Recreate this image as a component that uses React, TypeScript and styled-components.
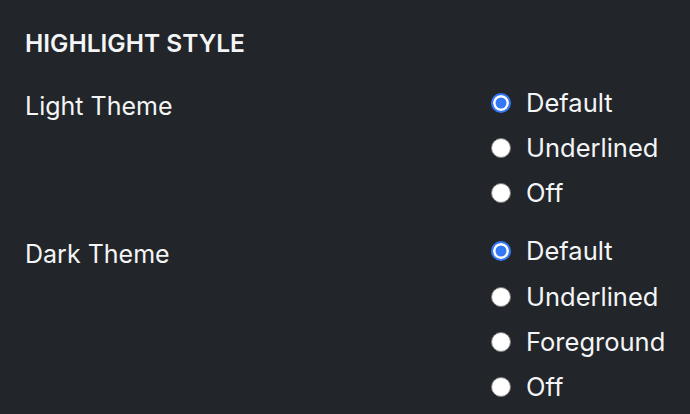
import styled, { createGlobalStyle } from "styled-components";

const GlobalStyle = createGlobalStyle`
  html, body {
    margin: 0;
    padding: 0;
    background: #222529;
  }
  body {
    font-family: Inter, "Noto Sans", sans-serif;
    color: #f4f5f6;
  }
`;

interface ThemeOption {
  name: string;
  options: string[];
  selected: string;
}

const themes: ThemeOption[] = [
  { name: "Light Theme", options: ["Default", "Underlined", "Off"], selected: "Default" },
  { name: "Dark Theme", options: ["Default", "Underlined", "Foreground", "Off"], selected: "Default" },
];

export default function App() {
  return (
    <>
      <GlobalStyle />
      <Panel>
        <Heading>HIGHLIGHT STYLE</Heading>
        {themes.map((theme) => (
          <SettingRow key={theme.name}>
            <SettingLabel>{theme.name}</SettingLabel>
            <OptionList>
              {theme.options.map((opt) => (
                <Option key={opt}>
                  <Radio
                    type="radio"
                    name={theme.name}
                    defaultChecked={opt === theme.selected}
                  />
                  <OptionText>{opt}</OptionText>
                </Option>
              ))}
            </OptionList>
          </SettingRow>
        ))}
      </Panel>
    </>
  );
}

const Panel = styled.div`
  width: 690px;
  height: 414px;
  box-sizing: border-box;
  padding: 28px 0 0 25px;
  background: #222529;
  overflow: hidden;
`;

const Heading = styled.div`
  font-size: 24.5px;
  font-weight: 600;
  line-height: 30px;
  margin-bottom: 29px;
`;

const SettingRow = styled.div`
  display: flex;
  align-items: flex-start;
  margin-bottom: 26px;
`;

const SettingLabel = styled.div`
  width: 466px;
  font-size: 25px;
  line-height: 32px;
  padding-top: 3px;
`;

const OptionList = styled.div`
  display: flex;
  flex-direction: column;
  gap: 13.2px;
`;

const Option = styled.label`
  display: flex;
  align-items: center;
  height: 32px;
  gap: 15px;
`;

const Radio = styled.input`
  appearance: none;
  margin: 0;
  width: 20px;
  height: 20px;
  border-radius: 50%;
  background: #ffffff;
  border: 1px solid #7d7d7d;
  box-sizing: border-box;

  &:checked {
    background: #3478f6;
    border: 2px solid #3478f6;
    box-shadow: inset 0 0 0 2.5px #ffffff;
  }
`;

const OptionText = styled.span`
  font-size: 25.5px;
  line-height: 32px;
`;
